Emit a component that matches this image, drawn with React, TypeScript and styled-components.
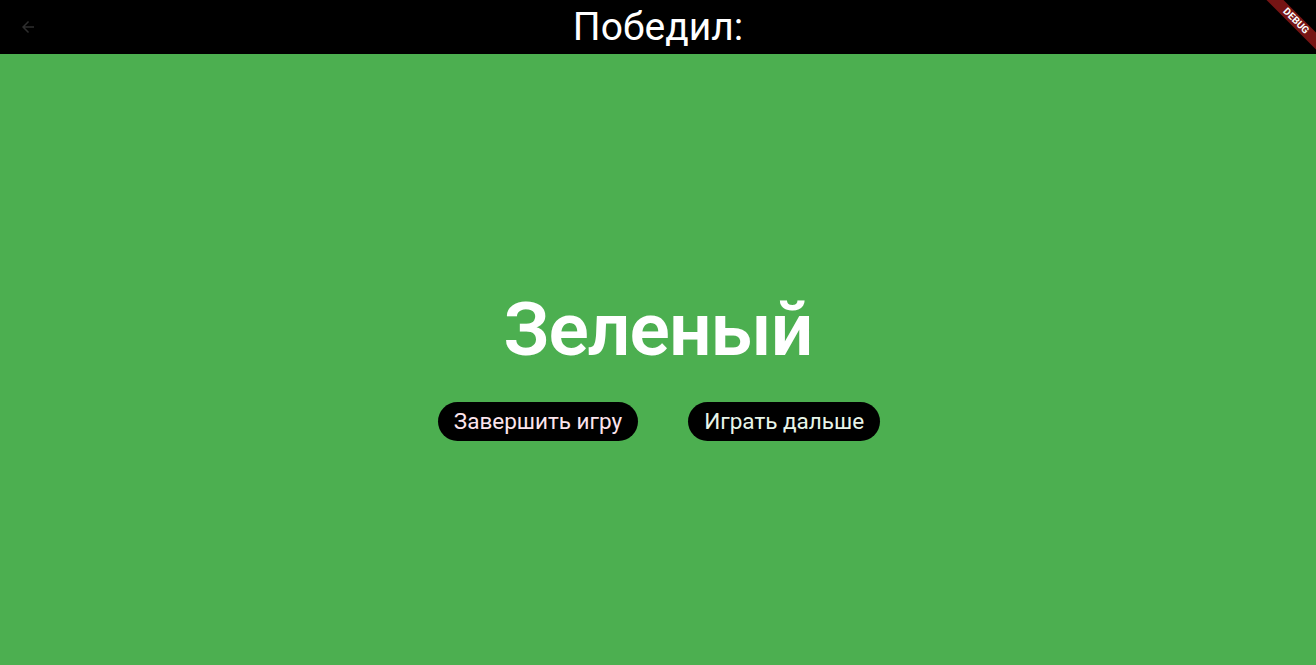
import styled, { createGlobalStyle } from 'styled-components';

const GlobalStyle = createGlobalStyle`
  html, body {
    margin: 0;
    padding: 0;
    height: 100%;
    overflow: hidden;
  }
  #root {
    height: 100%;
  }
`;

const Screen = styled.div`
  position: relative;
  display: flex;
  flex-direction: column;
  width: 100%;
  height: 100vh;
  background: #4caf50;
  font-family: Roboto, 'Noto Sans', sans-serif;
  overflow: hidden;
`;

const AppBar = styled.header`
  display: flex;
  align-items: center;
  justify-content: center;
  position: relative;
  height: 54px;
  flex-shrink: 0;
  background: #000;
`;

const BackButton = styled.button`
  position: absolute;
  left: 14px;
  top: 13px;
  width: 28px;
  height: 28px;
  padding: 0;
  border: none;
  background: transparent;
  display: flex;
  align-items: center;
  justify-content: center;
`;

const Title = styled.h1`
  margin: 0;
  font-size: 39px;
  font-weight: 400;
  color: #fff;
  line-height: 1;
`;

const Body = styled.main`
  flex: 1;
  display: flex;
  flex-direction: column;
  align-items: center;
  justify-content: center;
  padding-top: 6px;
`;

const Winner = styled.div`
  font-size: 75px;
  font-weight: 600;
  letter-spacing: -1px;
  color: #fff;
  line-height: 88px;
`;

const Actions = styled.div`
  display: flex;
  gap: 50px;
  margin-top: 29px;
  margin-left: 2px;
`;

const Pill = styled.button<{ $text: string }>`
  height: 39px;
  padding: 0 16px;
  border: none;
  border-radius: 20px;
  background: #000;
  color: ${(p) => p.$text};
  font-family: Roboto, 'Noto Sans', sans-serif;
  font-size: 22.5px;
  line-height: 1;
`;

// debug ribbon over the top-right corner
const Banner = styled.div`
  position: absolute;
  top: 15px;
  right: -40px;
  width: 120px;
  height: 12px;
  background: #761414;
  color: #fff;
  font-size: 10px;
  font-weight: 700;
  line-height: 12px;
  text-align: center;
  transform: rotate(45deg);
`;

export default function App() {
  return (
    <>
      <GlobalStyle />
      <Screen>
        <AppBar>
          <BackButton aria-label='back'>
            <svg width='18' height='18' viewBox='0 0 24 24'>
              <path
                d='M20 11H7.83l5.59-5.59L12 4l-8 8 8 8 1.41-1.41L7.83 13H20v-2z'
                fill='#2e2e2e'
              />
            </svg>
          </BackButton>
          <Title>Победил:</Title>
          <Banner>DEBUG</Banner>
        </AppBar>
        <Body>
          <Winner>Зеленый</Winner>
          <Actions>
            <Pill $text='#fce4ec'>Завершить игру</Pill>
            <Pill $text='#e8f5e9'>Играть дальше</Pill>
          </Actions>
        </Body>
      </Screen>
    </>
  );
}
